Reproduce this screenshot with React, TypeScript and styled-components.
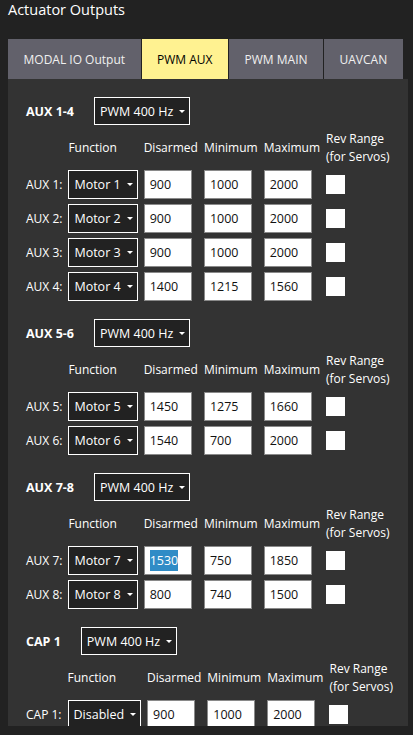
import styled, { createGlobalStyle } from "styled-components";

const GlobalStyle = createGlobalStyle`
	html, body {
		margin: 0;
		background: #222222;
	}
	body {
		font-family: "Open Sans", "DejaVu Sans", sans-serif;
		color: #ffffff;
		font-size: 12px;
	}
`;

interface OutputRow {
	label: string;
	func: string;
	disarmed: string;
	min: string;
	max: string;
	selected?: boolean;
}

interface Group {
	title: string;
	rate: string;
	rows: OutputRow[];
}

const tabs = ["MODAL IO Output", "PWM AUX", "PWM MAIN", "UAVCAN"];

const groups: Group[] = [
	{
		title: "AUX 1-4",
		rate: "PWM 400 Hz",
		rows: [
			{ label: "AUX 1:", func: "Motor 1", disarmed: "900", min: "1000", max: "2000" },
			{ label: "AUX 2:", func: "Motor 2", disarmed: "900", min: "1000", max: "2000" },
			{ label: "AUX 3:", func: "Motor 3", disarmed: "900", min: "1000", max: "2000" },
			{ label: "AUX 4:", func: "Motor 4", disarmed: "1400", min: "1215", max: "1560" },
		],
	},
	{
		title: "AUX 5-6",
		rate: "PWM 400 Hz",
		rows: [
			{ label: "AUX 5:", func: "Motor 5", disarmed: "1450", min: "1275", max: "1660" },
			{ label: "AUX 6:", func: "Motor 6", disarmed: "1540", min: "700", max: "2000" },
		],
	},
	{
		title: "AUX 7-8",
		rate: "PWM 400 Hz",
		rows: [
			{ label: "AUX 7:", func: "Motor 7", disarmed: "1530", min: "750", max: "1850", selected: true },
			{ label: "AUX 8:", func: "Motor 8", disarmed: "800", min: "740", max: "1500" },
		],
	},
	{
		title: "CAP 1",
		rate: "PWM 400 Hz",
		rows: [{ label: "CAP 1:", func: "Disabled", disarmed: "900", min: "1000", max: "2000" }],
	},
];

function Combo({ text, tall }: { text: string; tall?: boolean }) {
	return (
		<ComboBox tall={tall}>
			<span>{text}</span>
			<Arrow />
		</ComboBox>
	);
}

function App() {
	return (
		<Page>
			<GlobalStyle />
			<Title>Actuator Outputs</Title>
			<TabBar>
				{tabs.map((t) => (
					<Tab key={t} active={t === "PWM AUX"}>
						{t}
					</Tab>
				))}
			</TabBar>
			<Panel>
				{groups.map((g) => (
					<Section key={g.title}>
						<SectionHead>
							<GroupTitle>{g.title}</GroupTitle>
							<Combo text={g.rate} />
						</SectionHead>
						<Grid>
							<span />
							<Header>Function</Header>
							<Header>Disarmed</Header>
							<Header>Minimum</Header>
							<Header>Maximum</Header>
							<Header>
								Rev Range
								<br />
								(for Servos)
							</Header>
							{g.rows.map((r) => (
								<Row key={r.label}>
									<RowLabel>{r.label}</RowLabel>
									<Combo text={r.func} tall />
									<Field>{r.selected ? <Selected>{r.disarmed}</Selected> : r.disarmed}</Field>
									<Field>{r.min}</Field>
									<Field>{r.max}</Field>
									<Check />
								</Row>
							))}
						</Grid>
					</Section>
				))}
			</Panel>
		</Page>
	);
}

const Page = styled.div`
	padding: 0 5px 0 8px;
	height: 735px;
	box-sizing: border-box;
	display: flex;
	flex-direction: column;
	align-items: flex-start;
`;

const Title = styled.div`
	font-size: 14.5px;
	line-height: 20px;
	color: #ffffff;
	white-space: nowrap;
`;

const TabBar = styled.div`
	display: flex;
	gap: 1px;
	margin-top: 19px;
`;

const Tab = styled.div<{ active?: boolean }>`
	height: 40px;
	padding: 0 15.5px;
	display: flex;
	align-items: center;
	white-space: nowrap;
	background: ${({ active }) => (active ? "#fff291" : "#62616b")};
	color: ${({ active }) => (active ? "#000000" : "#f0f0f0")};
	font-size: 12px;
`;

const Panel = styled.div`
	width: 400px;
	height: 647px;
	box-sizing: border-box;
	background: #333333;
	padding: 18px 18px 0;
	overflow: hidden;
	display: flex;
	flex-direction: column;
	gap: 18px;
	flex-shrink: 0;
`;

const Section = styled.div`
	display: flex;
	flex-direction: column;
	gap: 5px;
`;

const SectionHead = styled.div`
	display: flex;
	align-items: center;
	gap: 20px;
`;

const GroupTitle = styled.span`
	font-weight: bold;
	white-space: nowrap;
	font-size: 12.5px;
`;

const ComboBox = styled.div<{ tall?: boolean }>`
	height: ${({ tall }) => (tall ? "29px" : "28px")};
	box-sizing: border-box;
	border: 1px solid #ffffff;
	background: #222222;
	display: inline-flex;
	align-items: center;
	gap: 6px;
	padding: 0 4px 0 5px;
	white-space: nowrap;
	justify-self: start;
	font-size: 12.5px;
`;

const Arrow = styled.i`
	width: 0;
	height: 0;
	border-left: 3px solid transparent;
	border-right: 3px solid transparent;
	border-top: 3px solid #ffffff;
`;

const Grid = styled.div`
	display: grid;
	grid-template-columns: repeat(6, auto);
	justify-content: start;
	align-items: center;
	column-gap: 6px;
	row-gap: 5px;
`;

const Row = styled.div`
	display: contents;
`;

const Header = styled.span`
	line-height: 17.5px;
	white-space: nowrap;
	font-size: 12px;
`;

const RowLabel = styled.span`
	white-space: nowrap;
	font-size: 12px;
`;

const Field = styled.div`
	width: 48px;
	height: 29px;
	box-sizing: border-box;
	background: #ffffff;
	border: 1px solid #8a8a8a;
	color: #111111;
	display: flex;
	align-items: center;
	padding-left: 5px;
	font-size: 12.5px;
`;

const Selected = styled.span`
	background: #308cc6;
	color: #ffffff;
	line-height: 21px;
`;

const Check = styled.div`
	width: 19px;
	height: 19px;
	background: #ffffff;
`;

export default App;
